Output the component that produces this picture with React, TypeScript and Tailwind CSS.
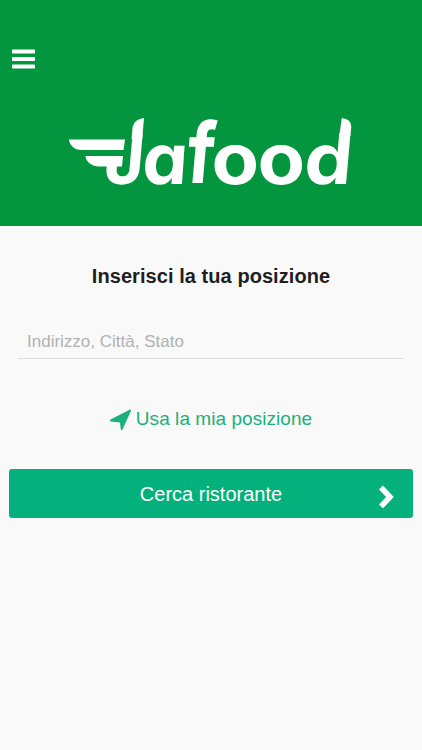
import React from "react";

const MenuIcon = () => (
  <svg width="23" height="20" viewBox="0 0 23 20" fill="#fff">
    <rect y="0.500" width="23" height="4" rx="0.8" />
    <rect y="8" width="23" height="4" rx="0.8" />
    <rect y="15.500" width="23" height="4" rx="0.8" />
  </svg>
);

const letters = [
  { char: "J", transform: "translate(38 68.500) skewX(-5) scale(1 1.02)" },
  { char: "a", transform: "translate(76 68.500) skewX(-4) scale(1.06 1.03)" },
  { char: "f", transform: "translate(120 68) skewX(-5) scale(1.03 1.23)" },
  { char: "o", transform: "translate(146.500 68.500) scale(1.14 1.03)" },
  { char: "o", transform: "translate(192.500 68.500) scale(1.14 1.03)" },
  { char: "d", transform: "translate(237.800 68.500) skewX(-5) scale(1.12 1.03)" },
];

const Logo = () => (
  <svg
    width="300"
    height="90"
    viewBox="0 0 300 90"
    fill="#fff"
    className="overflow-visible"
  >
    {/* Wing feathers */}
    <path d="M4 24.500H60L58.500 35H17C9 35 4.500 30 4 24.500Z" />
    <path d="M20.500 41H58L57 51.500H34C27 51.500 21 47 20.500 41Z" />
    {/* Feathered tips */}
    <path d="M66.500 24L67.600 12Q69.500 4 79 3L77.200 24Z" />
    <path d="M274.300 21L276.800 3Q286.300 4 286.300 12L285.300 21Z" />
    {letters.map((letter, index) => (
      <text
        key={index}
        transform={letter.transform}
        className="font-['Inter',sans-serif] text-[68px] leading-none font-bold [font-feature-settings:'cv11']"
      >
        {letter.char}
      </text>
    ))}
  </svg>
);

const App = () => {
  return (
    <div className="h-[750px] w-full bg-[#f9f9f9] font-['Liberation_Sans',Arial,sans-serif]">
      <header className="h-[226px] bg-[#04963f] pt-[49px]">
        <button className="ml-3 block h-5" aria-label="Menu">
          <MenuIcon />
        </button>
        <div className="ml-[65px] mt-[46px]">
          <Logo />
        </div>
      </header>

      <main>
        <h1 className="pt-[38px] text-center text-[20px] leading-6 font-bold tracking-[0.06px] text-[#1f1f21]">
          Inserisci la tua posizione
        </h1>
        <div className="mx-[18px] mt-9 border-b-[1.5px] border-[#dddddd]">
          <input
            type="text"
            placeholder="Indirizzo, Città, Stato"
            className="block h-[34px] w-full bg-transparent px-[9px] pt-0.5 text-[17px] outline-none placeholder:text-[#b1b1b1]"
          />
        </div>
        <button className="mx-auto mt-[49px] flex h-6 items-center gap-1 text-[19px] tracking-[0.05px] text-[#1bb07c]">
          <svg width="22" height="22" viewBox="0 0 22 22" fill="currentColor">
            <path d="M20 .500Q21.700.200 21 1.800L12.500 20.500Q11.500 21.800 10.800 20.500L10 13.500L.800 12.500Q-.800 11.500.600 10.500Z" />
          </svg>
          <span className="-mt-px">Usa la mia posizione</span>
        </button>
        <button className="mx-[9px] mt-[37px] flex h-[49px] w-[404px] items-center rounded-[3px] bg-[#04b17c] text-[20px] text-white">
          <span className="ml-[45px] flex-1 pt-px text-center">Cerca ristorante</span>
          <svg
            width="45"
            height="28"
            viewBox="0 0 45 28"
            fill="none"
            stroke="#fff"
            strokeWidth="5.500"
          >
            <path d="M13 7.500L22 17L13 26.500" />
          </svg>
        </button>
      </main>
    </div>
  );
};

export default App;
